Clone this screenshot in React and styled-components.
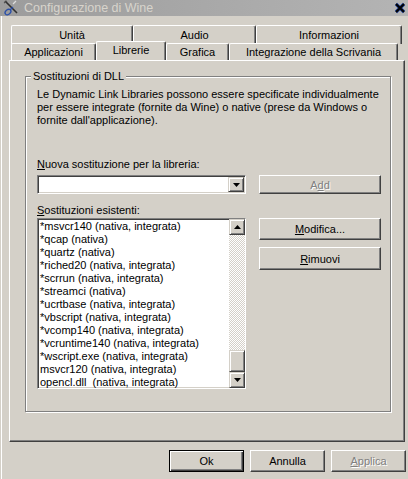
import React from 'react';
import styled, { createGlobalStyle } from 'styled-components';

const GlobalStyle = createGlobalStyle`
  html, body {
    margin: 0;
    padding: 0;
    background: #d4d0c8;
  }
  body {
    font-family: 'Liberation Sans', Arial, sans-serif;
    font-size: 11px;
    color: #000;
  }
`;

const Window = styled.div`
  width: 408px;
  height: 479px;
  background: #d4d0c8;
  display: flex;
  flex-direction: column;
  overflow: hidden;
`;

const TitleBar = styled.div`
  height: 16px;
  flex: none;
  display: flex;
  align-items: center;
  padding: 0 2px 0 3px;
  background: linear-gradient(90deg, #9c9c9c, #b4b4b4);
`;

const TitleText = styled.span`
  flex: 1;
  margin-left: 5px;
  color: #d8d4cc;
  font-size: 12.5px;
  line-height: 16px;
  white-space: nowrap;
`;

const Body = styled.div`
  flex: 1;
  margin-left: 1px;
  border-left: 1px solid #fff;
  padding: 0 3px 0 7px;
  display: flex;
  flex-direction: column;
`;

const TabStack = styled.div`
  margin-top: 9px;
  display: flex;
  flex-direction: column;
`;

const TabRow = styled.div`
  display: flex;
  height: ${p => p.$h}px;
  padding-left: 2px;
  position: relative;
  z-index: ${p => (p.$front ? 2 : 1)};
`;

const Tab = styled.div`
  box-sizing: border-box;
  width: ${p => p.$w}px;
  height: ${p => (p.$active ? p.$h + 3 : p.$h + 1)}px;
  margin-top: ${p => (p.$active ? -2 : 0)}px;
  background: #d4d0c8;
  border-top: 1px solid #fff;
  border-left: 1px solid #fff;
  border-right: 1px solid #404040;
  border-radius: 2px 2px 0 0;
  box-shadow: inset -1px 0 #808080;
  display: flex;
  align-items: center;
  justify-content: center;
  padding-bottom: ${p => (p.$active ? 3 : 1)}px;
  white-space: nowrap;
  position: relative;
  z-index: ${p => (p.$active ? 3 : 1)};
`;

const Panel = styled.div`
  box-sizing: border-box;
  height: 382px;
  border: 1px solid;
  border-color: #fff #404040 #404040 #fff;
  box-shadow: inset -1px -1px #808080;
  padding: 9px 13px 0 15px;
  position: relative;
  z-index: 2;
`;

const Group = styled.fieldset`
  box-sizing: border-box;
  width: 366px;
  height: 342px;
  margin: 0;
  padding: 5px 8px 0 11px;
  border: 1px solid #808080;
  box-shadow: inset 1px 1px #fff, 1px 1px #fff;
  min-inline-size: 0;
`;

const Legend = styled.legend`
  margin-left: -6px;
  padding: 0 2px;
  line-height: 13px;
  background: #d4d0c8;
`;

const GroupGrid = styled.div`
  display: grid;
  grid-template-columns: 209px 122px;
  column-gap: 13px;
`;

const Description = styled.div`
  grid-column: 1 / -1;
  line-height: 13px;
  white-space: nowrap;
  margin-bottom: 31px;
`;

const FieldLabel = styled.div`
  grid-column: 1 / -1;
  line-height: 13px;
  margin-bottom: ${p => p.$mb}px;
`;

const Key = styled.span`
  text-decoration: underline;
  text-underline-offset: 1px;
`;

const Sunken = styled.div`
  box-sizing: border-box;
  background: #fff;
  border: 1px solid;
  border-color: #808080 #fff #fff #808080;
  box-shadow: inset 1px 1px #404040, inset -1px -1px #d4d0c8;
  padding: 1px;
`;

const Combo = styled(Sunken)`
  height: 19px;
  display: flex;
  justify-content: flex-end;
  margin-bottom: 10px;
`;

const ArrowButton = styled.div`
  box-sizing: border-box;
  width: 16px;
  height: ${p => p.$h || 15}px;
  flex: none;
  background: #d4d0c8;
  border: 1px solid;
  border-color: #d4d0c8 #404040 #404040 #d4d0c8;
  box-shadow: inset 1px 1px #fff, inset -1px -1px #808080;
  display: flex;
  align-items: center;
  justify-content: center;
`;

const Button = styled.button`
  box-sizing: border-box;
  width: ${p => p.$w || 122}px;
  height: ${p => p.$h || 22}px;
  margin: 0;
  padding: 0;
  font: inherit;
  color: ${p => (p.disabled ? '#808080' : '#000')};
  text-shadow: ${p => (p.disabled ? '1px 1px #fff' : 'none')};
  background: #d4d0c8;
  border: 1px solid;
  border-color: ${p => (p.$default ? '#000' : '#fff #404040 #404040 #fff')};
  box-shadow: ${p =>
    p.$default
      ? 'inset 1px 1px #fff, inset -1px -1px #404040, inset -2px -2px #808080'
      : 'inset -1px -1px #808080'};
  cursor: default;
`;

const AddButton = styled(Button)`
  align-self: start;
`;

const ListBox = styled(Sunken)`
  height: 171px;
  display: flex;
  overflow: hidden;
  padding: 1px 0 0 1px;
`;

const ListItems = styled.div`
  flex: 1;
  padding-left: 1px;
  line-height: 13px;
  white-space: pre;
  overflow: hidden;
`;

const ScrollBar = styled.div`
  width: 16px;
  flex: none;
  display: flex;
  flex-direction: column;
  margin-top: -1px;
`;

const Track = styled.div`
  flex: 1;
  display: flex;
  flex-direction: column;
  justify-content: flex-end;
  background-color: #fff;
  background-image: repeating-conic-gradient(#d4d0c8 0 25%, #fff 0 50%);
  background-size: 2px 2px;
`;

const Thumb = styled(ArrowButton)`
  height: 22px;
`;

const SideButtons = styled.div`
  display: flex;
  flex-direction: column;
  gap: 7px;
`;

const Footer = styled.div`
  display: flex;
  justify-content: flex-end;
  gap: 6px;
  margin-top: 8px;
  margin-right: -1px;
`;

const WineIcon = () => (
  <svg width="16" height="16" viewBox="0 0 16 16">
    <path d="M2 1 L14 13" stroke="#303030" strokeWidth="1.6" />
    <path d="M1 3 L4 1" stroke="#505050" strokeWidth="1.2" />
    <path d="M10 4 L13 1" stroke="#ddd" strokeWidth="1.2" />
    <ellipse cx="5" cy="12" rx="3.2" ry="2.4" transform="rotate(-40 5 12)" fill="none" stroke="#2a4fa8" strokeWidth="1.3" />
    <path d="M7 10 L10 7" stroke="#2a4fa8" strokeWidth="1.2" />
  </svg>
);

const CloseIcon = () => (
  <svg width="12" height="12" viewBox="0 0 12 12">
    <path d="M2 2 L10 10 M10 2 L2 10" stroke="#1c3f9a" strokeWidth="3.2" />
    <path d="M2 2 L10 10 M10 2 L2 10" stroke="#000" strokeWidth="2" />
  </svg>
);

const Arrow = ({ down }) => (
  <svg width="7" height="4" viewBox="0 0 7 4">
    <path d={down ? 'M0 0 H7 L3.5 4 Z' : 'M0 4 H7 L3.5 0 Z'} fill="#000" />
  </svg>
);

const topTabs = [
  { label: 'Unità', w: 122 },
  { label: 'Audio', w: 123 },
  { label: 'Informazioni', w: 146 },
];

const bottomTabs = [
  { label: 'Applicazioni', w: 85 },
  { label: 'Librerie', w: 70, active: true },
  { label: 'Grafica', w: 63 },
  { label: 'Integrazione della Scrivania', w: 169 },
];

const overrides = [
  '*msvcr140 (nativa, integrata)',
  '*qcap (nativa)',
  '*quartz (nativa)',
  '*riched20 (nativa, integrata)',
  '*scrrun (nativa, integrata)',
  '*streamci (nativa)',
  '*ucrtbase (nativa, integrata)',
  '*vbscript (nativa, integrata)',
  '*vcomp140 (nativa, integrata)',
  '*vcruntime140 (nativa, integrata)',
  '*wscript.exe (nativa, integrata)',
  'msvcr120 (nativa, integrata)',
  'opencl.dll  (nativa, integrata)',
];

export default function App() {
  return (
    <>
      <GlobalStyle />
      <Window>
        <TitleBar>
          <WineIcon />
          <TitleText>Configurazione di Wine</TitleText>
          <CloseIcon />
        </TitleBar>
        <Body>
          <TabStack>
            <TabRow $h={18}>
              {topTabs.map(t => (
                <Tab key={t.label} $w={t.w} $h={18}>{t.label}</Tab>
              ))}
            </TabRow>
            <TabRow $h={17} $front>
              {bottomTabs.map(t => (
                <Tab key={t.label} $w={t.w} $h={17} $active={t.active}>{t.label}</Tab>
              ))}
            </TabRow>
          </TabStack>
          <Panel>
            <Group>
              <Legend>Sostituzioni di DLL</Legend>
              <GroupGrid>
                <Description>
                  Le Dynamic Link Libraries possono essere specificate individualmente<br />
                  per essere integrate (fornite da Wine) o native (prese da Windows o<br />
                  fornite dall'applicazione).
                </Description>
                <FieldLabel $mb={4}><Key>N</Key>uova sostituzione per la libreria:</FieldLabel>
                <Combo>
                  <ArrowButton><Arrow down /></ArrowButton>
                </Combo>
                <AddButton $h={19} disabled>A<Key>d</Key>d</AddButton>
                <FieldLabel $mb={1}><Key>S</Key>ostituzioni esistenti:</FieldLabel>
                <ListBox>
                  <ListItems>
                    {overrides.map(o => (
                      <div key={o}>{o}</div>
                    ))}
                  </ListItems>
                  <ScrollBar>
                    <ArrowButton $h={16}><Arrow /></ArrowButton>
                    <Track>
                      <Thumb />
                    </Track>
                    <ArrowButton $h={16}><Arrow down /></ArrowButton>
                  </ScrollBar>
                </ListBox>
                <SideButtons>
                  <Button><Key>M</Key>odifica...</Button>
                  <Button $h={23}><Key>R</Key>imuovi</Button>
                </SideButtons>
              </GroupGrid>
            </Group>
          </Panel>
          <Footer>
            <Button $w={75} $default>Ok</Button>
            <Button $w={75}>Annulla</Button>
            <Button $w={75} disabled><Key>A</Key>pplica</Button>
          </Footer>
        </Body>
      </Window>
    </>
  );
}
